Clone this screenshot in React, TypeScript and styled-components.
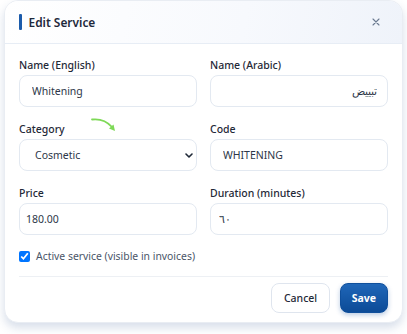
import styled, { createGlobalStyle } from "styled-components";

const GlobalStyle = createGlobalStyle`
  html, body {
    margin: 0;
    padding: 0;
    background: #ffffff;
    font-family: "Noto Sans", "Open Sans", sans-serif;
  }
  * {
    box-sizing: border-box;
  }
`;

const Page = styled.div`
  padding: 0 4px 11px;
`;

const Card = styled.div`
  background: #ffffff;
  border-radius: 14px;
  border: 1px solid #e9edf3;
  box-shadow: 0 5px 10px rgba(60, 95, 150, 0.2);
  overflow: hidden;
`;

const Header = styled.div`
  height: 43px;
  display: flex;
  align-items: center;
  justify-content: space-between;
  padding: 0 19px 0 14px;
  background: linear-gradient(100deg, #ffffff 0%, #f7f9fd 60%, #eff3fa 100%);
  border-bottom: 1px solid #e7edf5;
`;

const Title = styled.h2`
  margin: 0;
  display: flex;
  align-items: center;
  gap: 7px;
  font-size: 11.9px;
  font-weight: 600;
  color: #1e293b;
  &::before {
    content: "";
    width: 2.5px;
    height: 16px;
    border-radius: 1px;
    background: #1c5cab;
  }
`;

const CloseButton = styled.button`
  width: 14px;
  height: 14px;
  padding: 0;
  border: none;
  background: transparent;
  display: flex;
  align-items: center;
  justify-content: center;
  color: #6b7a90;
`;

const Body = styled.div`
  padding: 14px 14px 0;
`;

const Grid = styled.div`
  display: grid;
  grid-template-columns: 1fr 1fr;
  column-gap: 13px;
  row-gap: 15px;
`;

const Field = styled.div`
  position: relative;
  display: flex;
  flex-direction: column;
`;

const Label = styled.label`
  font-size: 10.5px;
  line-height: 14px;
  font-weight: 500;
  color: #1f2937;
  margin-bottom: 3px;
`;

const Input = styled.input<{ $pad?: number }>`
  height: 32px;
  width: 100%;
  border: 1px solid #e3e9f1;
  border-radius: 8px;
  padding: 0 10px 0 ${(p) => p.$pad ?? 12}px;
  font-family: inherit;
  font-size: 10.5px;
  color: #2d3748;
  background: #ffffff;
  outline: none;
`;

const SelectWrap = styled.div`
  position: relative;
`;

const Select = styled.select`
  appearance: none;
  display: block;
  height: 32px;
  width: 100%;
  border: 1px solid #e3e9f1;
  border-radius: 8px;
  padding: 0 20px 0 15px;
  font-family: inherit;
  font-size: 10.5px;
  color: #2d3748;
  background: #ffffff;
  outline: none;
`;

const Chevron = styled.svg`
  position: absolute;
  right: 4px;
  top: 14px;
  pointer-events: none;
`;

const Arrow = styled.svg`
  position: absolute;
  left: 72px;
  top: -6px;
  pointer-events: none;
`;

const CheckRow = styled.label`
  display: flex;
  align-items: center;
  gap: 6px;
  margin-top: 13px;
  height: 16px;
  font-size: 10.4px;
  color: #4a5568;
  input {
    margin: 0;
    width: 11px;
    height: 11px;
  }
`;

const Footer = styled.div`
  margin-top: 12px;
  border-top: 1px solid #edf0f4;
  padding: 6px 0 9px;
  display: flex;
  justify-content: flex-end;
  gap: 10px;
`;

const Button = styled.button<{ $primary?: boolean }>`
  height: 30px;
  padding: 0 ${(p) => (p.$primary ? 11 : 11.5)}px;
  border-radius: 8px;
  font-family: inherit;
  font-size: 10.5px;
  font-weight: ${(p) => (p.$primary ? 700 : 500)};
  color: ${(p) => (p.$primary ? "#ffffff" : "#1f2937")};
  border: 1px solid ${(p) => (p.$primary ? "#0f4f9c" : "#dfe5ee")};
  background: ${(p) =>
    p.$primary ? "linear-gradient(180deg, #1f66b8 0%, #0c4b97 100%)" : "#ffffff"};
  box-shadow: ${(p) =>
    p.$primary ? "0 2px 5px rgba(20, 80, 160, 0.3)" : "none"};
`;

function App() {
  return (
    <Page>
      <GlobalStyle />
      <Card>
        <Header>
          <Title>Edit Service</Title>
          <CloseButton aria-label="Close">
            <svg width="8" height="8" viewBox="0 0 8 8">
              <path d="M1 1L7 7M7 1L1 7" stroke="currentColor" strokeWidth="1.1" strokeLinecap="round" />
            </svg>
          </CloseButton>
        </Header>
        <Body>
          <Grid>
            <Field>
              <Label>Name (English)</Label>
              <Input defaultValue="Whitening" />
            </Field>
            <Field>
              <Label>Name (Arabic)</Label>
              <Input dir="rtl" defaultValue="تبييض" />
            </Field>
            <Field>
              <Label>Category</Label>
              <Arrow width="30" height="20" viewBox="0 0 30 20">
                <path d="M1 3.5 Q 13 2 21 11" fill="none" stroke="#7ed957" strokeWidth="1.8" strokeLinecap="round" />
                <path d="M18 12.5 L24 15 L22.5 8.5 Z" fill="#7ed957" />
              </Arrow>
              <SelectWrap>
                <Select defaultValue="Cosmetic">
                  <option>Cosmetic</option>
                  <option>Preventive</option>
                  <option>Restorative</option>
                </Select>
                <Chevron width="8" height="5" viewBox="0 0 8 5">
                  <path d="M1 1L4 4L7 1" fill="none" stroke="#1f2937" strokeWidth="1.6" strokeLinecap="round" strokeLinejoin="round" />
                </Chevron>
              </SelectWrap>
            </Field>
            <Field>
              <Label>Code</Label>
              <Input defaultValue="WHITENING" />
            </Field>
            <Field>
              <Label>Price</Label>
              <Input $pad={6} defaultValue="180.00" />
            </Field>
            <Field>
              <Label>Duration (minutes)</Label>
              <Input $pad={8} defaultValue="٦٠" />
            </Field>
          </Grid>
          <CheckRow>
            <input type="checkbox" defaultChecked />
            Active service (visible in invoices)
          </CheckRow>
          <Footer>
            <Button>Cancel</Button>
            <Button $primary>Save</Button>
          </Footer>
        </Body>
      </Card>
    </Page>
  );
}

export default App;
